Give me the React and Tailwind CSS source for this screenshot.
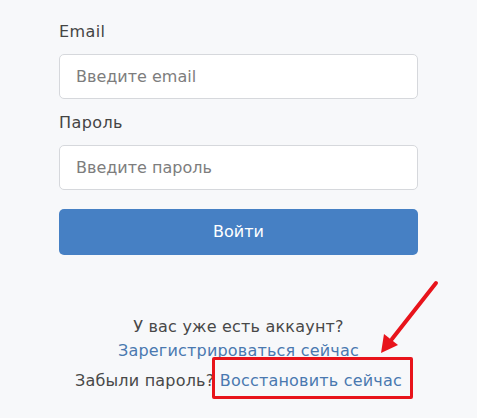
import React from "react";

const font = { fontFamily: '"DejaVu Sans", "Noto Sans", sans-serif' };

const Field = ({ label, placeholder, type, className }) => (
  <div className={className}>
    <label className="block text-[16px] leading-[22px] tracking-[0.4px] text-[#444]">{label}</label>
    <input
      type={type}
      placeholder={placeholder}
      className="mt-[11px] block w-full h-[45px] px-4 rounded-[5px] border border-[#d6d8dc] bg-white text-[16px] text-[#333] placeholder:text-[#7d7d7d] outline-none"
    />
  </div>
);

const App = () => {
  return (
    <div className="min-h-[418px] w-full bg-[#f7f8fa] overflow-hidden" style={font}>
      <div className="w-[359px] mx-auto pt-[21px]">
        <Field label="Email" placeholder="Введите email" type="email" />
        <Field label="Пароль" placeholder="Введите пароль" type="password" className="mt-[13px]" />

        <button className="mt-[19px] w-full h-[46px] rounded-[5px] bg-[#4680c4] text-white text-[16px]">
          Войти
        </button>

        {/* Bottom links */}
        <div className="mt-[60px] text-center text-[16px] leading-[24px] tracking-[0.2px] text-[#484848]">
          <div>У вас уже есть аккаунт?</div>
          <div>
            <a href="#" className="text-[#4a78b0]">Зарегистрироваться сейчас</a>
          </div>
          <div className="mt-[6px] whitespace-nowrap">
            Забыли пароль?{" "}
            <span className="relative inline-block">
              <a href="#" className="text-[#4a78b0]">Восстановить сейчас</a>
              {/* Annotation box */}
              <span className="absolute -left-[8px] -right-[11px] -top-[12px] -bottom-[6px] border-[3px] border-[#e8141b] rounded-[2px] pointer-events-none" />
              {/* Annotation arrow */}
              <svg className="absolute pointer-events-none" style={{ left: 150, top: -98 }} width="80" height="90" viewBox="0 0 80 90">
                <line x1="66" y1="12" x2="22" y2="68" stroke="#e8141b" strokeWidth="4" strokeLinecap="round" />
                <polygon points="11,82 14,63 28,74" fill="#e8141b" />
              </svg>
            </span>
          </div>
        </div>
      </div>
    </div>
  );
};

export default App;
